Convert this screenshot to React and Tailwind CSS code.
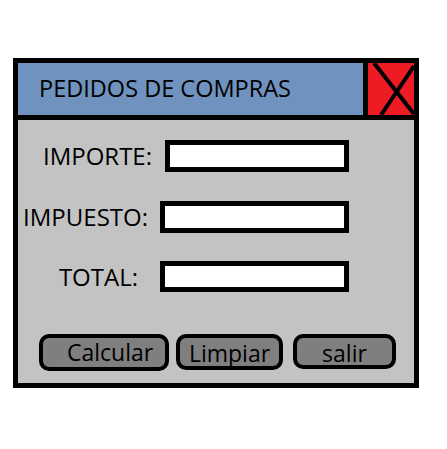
import React from 'react';

const FONT = { fontFamily: '"Open Sans", "Noto Sans", sans-serif' };

/* ── one label + input row ── */
function Field({ label, labelW, gap, inputW = 'w-[189px]', height = 32 }) {
  return (
    <div className="flex items-center">
      <div className={`${labelW} text-right text-[24px] leading-none text-black`}>{label}</div>
      <div className={`${gap} ${height === 32 ? 'h-[32px]' : 'h-[31px]'} ${inputW} border-[5px] border-black bg-white`} />
    </div>
  );
}

export default function App() {
  return (
    <div className="w-[447px] h-[449px] bg-white pt-[58px] pl-[13px]" style={FONT}>
      <div className="w-[406px] h-[330px] border-[5px] border-black flex flex-col">
        {/* Title bar */}
        <div className="h-[57px] flex border-b-[5px] border-black shrink-0">
          <div className="flex-1 bg-[#7092be] flex items-center pl-[21px] text-[23.5px] text-black">
            PEDIDOS DE COMPRAS
          </div>
          <div className="w-[51px] border-l-[5px] border-black bg-[#ed1c24]">
            <svg width="46" height="52" viewBox="0 0 46 52">
              <path d="M6 0 L46 51 M46 3 L13 52" stroke="#000" strokeWidth="4" fill="none" />
            </svg>
          </div>
        </div>

        {/* Body */}
        <div className="flex-1 bg-[#c3c3c3] flex flex-col pt-[20px]">
          <Field label="IMPORTE:" labelW="w-[134px]" gap="ml-[13px]" inputW="w-[184px]" />
          <div className="h-[29px]" />
          <Field label="IMPUESTO:" labelW="w-[130px]" gap="ml-[12px]" />
          <div className="h-[28px]" />
          <Field label="TOTAL:" labelW="w-[120px]" gap="ml-[22px]" height={31} />

          {/* Buttons */}
          <div className="flex items-start mt-[42px] ml-[21px] text-[23px] leading-none text-black">
            <button className="w-[130px] h-[37px] border-[4px] border-black rounded-[10px] bg-[#7f7f7f] flex items-end pb-[3px] pl-[24px]">
              Calcular
            </button>
            <button className="ml-[7px] w-[107px] h-[36px] border-[4px] border-black rounded-[10px] bg-[#7f7f7f] flex items-start justify-center pt-[4px]">
              Limpiar
            </button>
            <button className="ml-[10px] w-[103px] h-[35px] border-[4px] border-black rounded-[10px] bg-[#7f7f7f] flex items-start justify-center pt-[4px]">
              salir
            </button>
          </div>
        </div>
      </div>
    </div>
  );
}
